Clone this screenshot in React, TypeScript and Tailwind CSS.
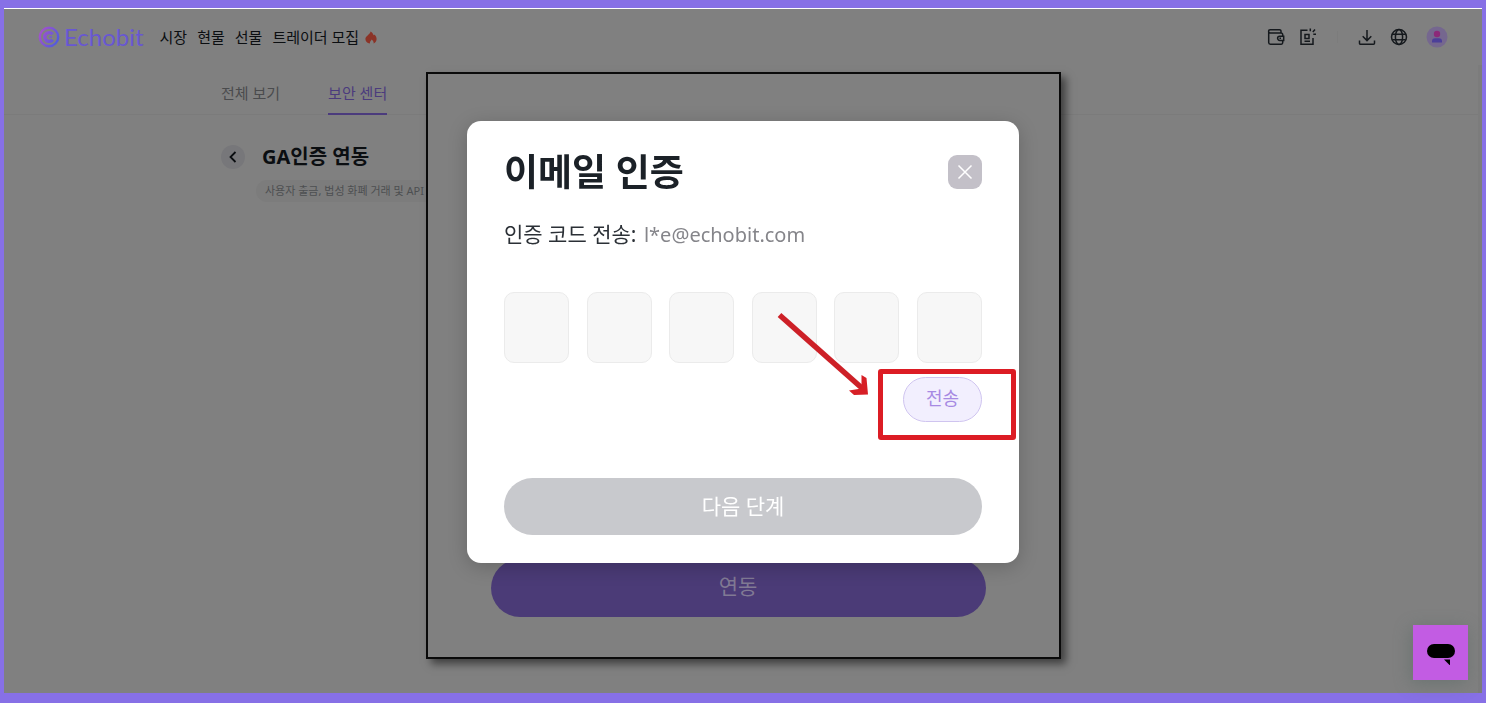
import React, { useState } from 'react';

const navItems = ['시장', '현물', '선물', '트레이더 모집'];
const CODE_LENGTH = 6;

const LogoMark = () => (
  <svg width="22" height="22" viewBox="0 0 22 22" fill="none" aria-hidden="true">
    <defs>
      <linearGradient id="logo" x1="1" y1="6" x2="21" y2="17" gradientUnits="userSpaceOnUse">
        <stop stopColor="#a850cc" />
        <stop offset="1" stopColor="#4a5ce0" />
      </linearGradient>
    </defs>
    <circle cx="11" cy="11" r="9.2" stroke="url(#logo)" strokeWidth="2.4" />
    <path d="M14.600 8.300A4.400 4.400 0 1 0 14.600 13.700" stroke="url(#logo)" strokeWidth="3.400" />
    <path d="M11 11h3" stroke="url(#logo)" strokeWidth="1.500" />
  </svg>
);

const FlameIcon = () => (
  <svg width="12" height="13" viewBox="0 0 12 13" aria-hidden="true">
    <path
      d="M5.600.5c2.400 1.500 2.300 2.700 3.200 3.700.3-.2.500-.5.600-.8 1.400 1.200 2.200 2.800 2.200 4.500 0 2-1.200 3.700-3 4.500.3-1.300-.3-2.600-2-3.900-.1 1-1.900 1.700-1.700 3.900C2 12 .4 10.200.4 7.900.4 5 4.600 4 5.600.5Z"
      fill="#8b3327"
    />
  </svg>
);

const WalletIcon = () => (
  <svg width="18" height="18" viewBox="0 0 18 18" fill="none" stroke="#15191d" strokeWidth="1.500" aria-hidden="true">
    <path d="M14 5V3.200a1.500 1.500 0 0 0-1.500-1.500H3.200a1.600 1.600 0 0 0 0 3.300h11a1.500 1.500 0 0 1 1.500 1.500v1.700M15.700 12.500v2a1.600 1.600 0 0 1-1.600 1.700H3.400a1.700 1.700 0 0 1-1.700-1.700V3.200" />
    <path d="M16.700 8.200h-4a2.100 2.100 0 0 0 0 4.200h4Z" />
    <path d="M12.500 10.300h1.500" />
  </svg>
);

const OrderIcon = () => (
  <svg width="18" height="18" viewBox="0 0 18 18" fill="none" stroke="#15191d" strokeWidth="1.500" aria-hidden="true">
    <path d="M8.500 2.200H2v14h12V10M6 6.500h4v4H6ZM5.500 13.200h5.500M11.300.5v2.700M16 1.500l-2.200 2.500M14.300 6.200H17" />
  </svg>
);

const DownloadIcon = () => (
  <svg width="18" height="18" viewBox="0 0 18 18" fill="none" stroke="#15191d" strokeWidth="1.500" aria-hidden="true">
    <path d="M9 2v10.500M4.700 8.300 9 12.600l4.300-4.300M1.500 12.500v2.700a1 1 0 0 0 1 1h13a1 1 0 0 0 1-1v-2.700" />
  </svg>
);

const GlobeIcon = () => (
  <svg width="18" height="18" viewBox="0 0 18 18" fill="none" stroke="#15191d" strokeWidth="1.500" aria-hidden="true">
    <circle cx="9" cy="9" r="7.500" />
    <ellipse cx="9" cy="9" rx="3.600" ry="7.500" />
    <path d="M2.300 6.200h13.400M2.300 11.800h13.400" />
  </svg>
);

const AvatarIcon = () => (
  <svg width="22" height="22" viewBox="0 0 22 22" aria-hidden="true">
    <circle cx="11" cy="11" r="10.500" fill="#75678f" />
    <circle cx="11" cy="8" r="3.200" fill="#8c2a79" />
    <path d="M6 16.500v-1.200a3 3 0 0 1 3-3h4a3 3 0 0 1 3 3v1.200Z" fill="#4c3f99" />
  </svg>
);

const Header = () => (
  <header className="flex h-14 items-center justify-between px-[34px]">
    <div className="flex items-center">
      <a href="#" className="flex items-center gap-1 font-['Lato',sans-serif] text-[24px] leading-7 text-[#6857d2]">
        <LogoMark />
        <span>Echobit</span>
      </a>
      <nav className="ml-4 flex items-center gap-2.5 text-[15px] text-[#0b0e11]">
        {navItems.map((item) => (
          <a key={item} href="#">{item}</a>
        ))}
      </nav>
      <span className="ml-1.5"><FlameIcon /></span>
    </div>
    <div className="flex items-center">
      <button type="button" aria-label="지갑"><WalletIcon /></button>
      <button type="button" aria-label="주문" className="ml-3.5"><OrderIcon /></button>
      <span className="mx-5 h-3 w-px bg-[#7c7c7c]" />
      <button type="button" aria-label="다운로드"><DownloadIcon /></button>
      <button type="button" aria-label="언어" className="ml-3.5"><GlobeIcon /></button>
      <button type="button" aria-label="내 계정" className="ml-[18px]"><AvatarIcon /></button>
    </div>
  </header>
);

const EmailDialog = () => {
  const [code, setCode] = useState<string[]>(Array(CODE_LENGTH).fill(''));

  const handleChange = (index: number, value: string) => {
    setCode(code.map((digit, i) => (i === index ? value : digit)));
  };

  return (
    <div
      role="dialog"
      aria-labelledby="dialog-title"
      className="relative z-10 mx-auto w-[552px] rounded-[14px] bg-white px-[37px] pb-7 pt-[34px] shadow-[0_4px_20px_rgba(0,0,0,0.2)]"
    >
      <div className="flex h-[34px] items-center justify-between">
        <h2 id="dialog-title" className="text-[37px] font-bold leading-[34px] text-[#1b2127]">이메일 인증</h2>
        <button type="button" aria-label="닫기" className="flex size-[34px] items-center justify-center rounded-[9px] bg-[#c3c0c8]">
          <svg width="16" height="16" viewBox="0 0 16 16" stroke="white" strokeWidth="1.500" aria-hidden="true">
            <path d="m1.500 1.500 13 13M14.500 1.500l-13 13" />
          </svg>
        </button>
      </div>
      <p className="mt-[31px] text-[21px] leading-7 text-[#2b3036]">
        인증 코드 전송: <span className="ml-0.5 text-[20px] text-[#85858a]">l*e@echobit.com</span>
      </p>

      <form onSubmit={(e) => e.preventDefault()}>
        <div className="mt-[43px] flex justify-between">
          {code.map((digit, i) => (
            <input
              key={i}
              type="text"
              inputMode="numeric"
              maxLength={1}
              aria-label={`인증 코드 ${i + 1}`}
              value={digit}
              onChange={(e) => handleChange(i, e.target.value)}
              className="h-[71px] w-[65px] rounded-[10px] border border-[#ebebeb] bg-[#f7f7f7] text-center text-[24px] outline-none"
            />
          ))}
        </div>

        {/* Send button with the red marker over it */}
        <div className="mt-3.5 flex justify-end">
          <div className="relative">
            <button type="button" className="block h-[45px] w-[79px] rounded-full border border-[#cfc4ef] bg-[#f2effe] pb-0.5 text-[18px] text-[#a78ae3]">
              전송
            </button>
            <div className="pointer-events-none absolute -left-[25px] -right-[34px] -top-2 h-[71px] rounded-[3px] border-[5px] border-[#dc1c24]" />
            <svg className="pointer-events-none absolute -left-[126px] -top-[66px]" width="94" height="86" viewBox="0 0 94 86" fill="none" aria-hidden="true">
              <path d="M2.500 4 86 78" stroke="#cd2027" strokeWidth="5.500" />
              <path d="M84.500 64l5 3 1.500 16.500-14 .5-5-4.500 12.500-2Z" fill="#d71f26" />
            </svg>
          </div>
        </div>

        <button type="submit" className="mt-14 block h-[57px] w-full rounded-full bg-[#c8c9cd] text-[21px] text-white">
          다음 단계
        </button>
      </form>
    </div>
  );
};

const App: React.FC = () => {
  return (
    <div className="flex min-h-screen flex-col border-x-4 border-b-[10px] border-t-8 border-[#8770e6] bg-[#808080] font-['Noto_Sans','Noto_Sans_CJK_KR',sans-serif]">
      <div className="h-px bg-white" />
      <Header />

      <div className="flex flex-1 flex-col border-r-4 border-[#7c7c7c]">
        <nav className="flex h-[50px] gap-12 border-b border-[#7b7b7b] pl-[217px] text-[15px] leading-6">
          <a href="#" className="pt-4 text-[#4a4b4d]">전체 보기</a>
          <a href="#" className="-mb-px border-b-2 border-[#4b3b7d] pt-4 text-[#4b3b7d]">보안 센터</a>
        </nav>

        <main className="pl-[217px] pt-[30px]">
          <div className="flex items-center gap-[17px]">
            <button type="button" aria-label="뒤로" className="flex size-6 items-center justify-center rounded-full bg-[#77777a]">
              <svg width="10" height="12" viewBox="0 0 10 12" fill="none" stroke="#0b0e11" strokeWidth="1.800" aria-hidden="true">
                <path d="M7.500 1 2.500 6l5 5" />
              </svg>
            </button>
            <h1 className="text-[20px] font-bold leading-6 text-[#0b0e11]">GA인증 연동</h1>
          </div>
          <p className="ml-[35px] mt-[11px] w-80 rounded-full bg-[#7c7c7c] pl-[9px] text-[11px] leading-[22px] text-[#4d4f51]">
            사용자 출금, 법성 화폐 거래 및 API
          </p>
        </main>
      </div>

      <div className="fixed inset-0 flex items-start justify-center pt-[72px]">
        <section className="w-[635px] border-2 border-[#0a0a0a] bg-[#808080] pb-10 pt-[47px] shadow-[5px_5px_8px_rgba(0,0,0,0.5)]">
          <EmailDialog />
          <div className="-mt-1 pl-[63px] pr-[73px]">
            <button type="button" className="h-[58px] w-full rounded-full bg-[#4b3b77] pb-0.5 text-[21px] text-[#817a94]">
              연동
            </button>
          </div>
        </section>
      </div>

      <button type="button" aria-label="채팅" className="fixed bottom-[23px] right-[18px] flex size-[55px] items-center justify-center bg-[#c25ce3] shadow-[-2px_3px_16px_rgba(80,100,95,0.45)]">
        <svg width="28" height="24" viewBox="0 0 28 24" aria-hidden="true">
          <rect y="3" width="28" height="14" rx="7" />
          <path d="M17 18.500h6v6Z" />
        </svg>
      </button>
    </div>
  );
};

export default App;
